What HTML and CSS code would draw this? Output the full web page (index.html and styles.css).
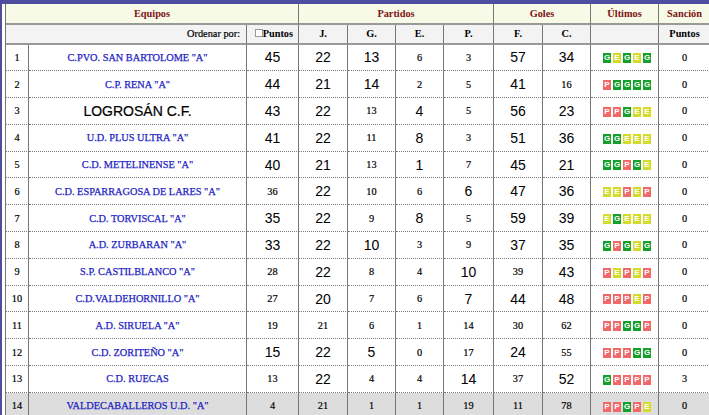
FILE: index.html
```html
<!DOCTYPE html>
<html lang="es">
<head>
<meta charset="utf-8">
<title>Clasificación</title>
<link rel="stylesheet" href="styles.css">
</head>
<body>
<div class="frame">
<table class="standings">
<colgroup>
<col class="c-rank"><col class="c-team"><col class="c-pts"><col class="c-j"><col class="c-g"><col class="c-e"><col class="c-p"><col class="c-f"><col class="c-c"><col class="c-last"><col class="c-san">
</colgroup>
<thead>
<tr class="h1">
<th colspan="3">Equipos</th>
<th colspan="4">Partidos</th>
<th colspan="2">Goles</th>
<th>Últimos</th>
<th class="end">Sanción</th>
</tr>
<tr class="h2">
<th colspan="2" class="order">Ordenar por:</th>
<th class="sortpts"><span class="chk"></span>Puntos</th>
<th>J.</th><th>G.</th><th>E.</th><th>P.</th><th>F.</th><th>C.</th><th></th><th class="end">Puntos</th>
</tr>
</thead>
<tbody>
<tr><td class="rank">1</td><td class="team">C.PVO. SAN BARTOLOME "A"</td><td class="b">45</td><td class="b">22</td><td class="b">13</td><td class="s">6</td><td class="s">3</td><td class="b">57</td><td class="b">34</td><td class="last"><span class="form"><span class="f G">G</span><span class="f E">E</span><span class="f G">G</span><span class="f E">E</span><span class="f G">G</span></span></td><td class="s end">0</td></tr>
<tr><td class="rank">2</td><td class="team">C.P. RENA "A"</td><td class="b">44</td><td class="b">21</td><td class="b">14</td><td class="s">2</td><td class="s">5</td><td class="b">41</td><td class="s">16</td><td class="last"><span class="form"><span class="f P">P</span><span class="f G">G</span><span class="f G">G</span><span class="f G">G</span><span class="f G">G</span></span></td><td class="s end">0</td></tr>
<tr><td class="rank">3</td><td class="team big">LOGROSÁN C.F.</td><td class="b">43</td><td class="b">22</td><td class="s">13</td><td class="b">4</td><td class="s">5</td><td class="b">56</td><td class="b">23</td><td class="last"><span class="form"><span class="f P">P</span><span class="f P">P</span><span class="f G">G</span><span class="f E">E</span><span class="f E">E</span></span></td><td class="s end">0</td></tr>
<tr><td class="rank">4</td><td class="team">U.D. PLUS ULTRA "A"</td><td class="b">41</td><td class="b">22</td><td class="s">11</td><td class="b">8</td><td class="s">3</td><td class="b">51</td><td class="b">36</td><td class="last"><span class="form"><span class="f G">G</span><span class="f G">G</span><span class="f E">E</span><span class="f E">E</span><span class="f E">E</span></span></td><td class="s end">0</td></tr>
<tr><td class="rank">5</td><td class="team">C.D. METELINENSE "A"</td><td class="b">40</td><td class="b">21</td><td class="s">13</td><td class="b">1</td><td class="s">7</td><td class="b">45</td><td class="b">21</td><td class="last"><span class="form"><span class="f G">G</span><span class="f G">G</span><span class="f P">P</span><span class="f G">G</span><span class="f E">E</span></span></td><td class="s end">0</td></tr>
<tr><td class="rank">6</td><td class="team">C.D. ESPARRAGOSA DE LARES "A"</td><td class="s">36</td><td class="b">22</td><td class="s">10</td><td class="s">6</td><td class="b">6</td><td class="b">47</td><td class="b">36</td><td class="last"><span class="form"><span class="f E">E</span><span class="f E">E</span><span class="f P">P</span><span class="f E">E</span><span class="f P">P</span></span></td><td class="s end">0</td></tr>
<tr><td class="rank">7</td><td class="team">C.D. TORVISCAL "A"</td><td class="b">35</td><td class="b">22</td><td class="s">9</td><td class="b">8</td><td class="s">5</td><td class="b">59</td><td class="b">39</td><td class="last"><span class="form"><span class="f E">E</span><span class="f G">G</span><span class="f E">E</span><span class="f E">E</span><span class="f E">E</span></span></td><td class="s end">0</td></tr>
<tr><td class="rank">8</td><td class="team">A.D. ZURBARAN "A"</td><td class="b">33</td><td class="b">22</td><td class="b">10</td><td class="s">3</td><td class="s">9</td><td class="b">37</td><td class="b">35</td><td class="last"><span class="form"><span class="f G">G</span><span class="f P">P</span><span class="f G">G</span><span class="f E">E</span><span class="f G">G</span></span></td><td class="s end">0</td></tr>
<tr><td class="rank">9</td><td class="team">S.P. CASTILBLANCO "A"</td><td class="s">28</td><td class="b">22</td><td class="s">8</td><td class="s">4</td><td class="b">10</td><td class="s">39</td><td class="b">43</td><td class="last"><span class="form"><span class="f P">P</span><span class="f E">E</span><span class="f P">P</span><span class="f E">E</span><span class="f P">P</span></span></td><td class="s end">0</td></tr>
<tr><td class="rank">10</td><td class="team">C.D.VALDEHORNILLO "A"</td><td class="s">27</td><td class="b">20</td><td class="s">7</td><td class="s">6</td><td class="b">7</td><td class="b">44</td><td class="b">48</td><td class="last"><span class="form"><span class="f P">P</span><span class="f P">P</span><span class="f P">P</span><span class="f E">E</span><span class="f P">P</span></span></td><td class="s end">0</td></tr>
<tr><td class="rank">11</td><td class="team">A.D. SIRUELA "A"</td><td class="s">19</td><td class="s">21</td><td class="s">6</td><td class="s">1</td><td class="s">14</td><td class="s">30</td><td class="s">62</td><td class="last"><span class="form"><span class="f P">P</span><span class="f P">P</span><span class="f G">G</span><span class="f G">G</span><span class="f P">P</span></span></td><td class="s end">0</td></tr>
<tr><td class="rank">12</td><td class="team">C.D. ZORITEÑO "A"</td><td class="b">15</td><td class="b">22</td><td class="b">5</td><td class="s">0</td><td class="s">17</td><td class="b">24</td><td class="s">55</td><td class="last"><span class="form"><span class="f P">P</span><span class="f P">P</span><span class="f P">P</span><span class="f G">G</span><span class="f G">G</span></span></td><td class="s end">0</td></tr>
<tr><td class="rank">13</td><td class="team">C.D. RUECAS</td><td class="s">13</td><td class="b">22</td><td class="s">4</td><td class="s">4</td><td class="b">14</td><td class="s">37</td><td class="b">52</td><td class="last"><span class="form"><span class="f G">G</span><span class="f P">P</span><span class="f P">P</span><span class="f P">P</span><span class="f P">P</span></span></td><td class="s end">3</td></tr>
<tr class="relegated"><td class="rank">14</td><td class="team">VALDECABALLEROS U.D. "A"</td><td class="s">4</td><td class="s">21</td><td class="s">1</td><td class="s">1</td><td class="s">19</td><td class="s">11</td><td class="s">78</td><td class="last"><span class="form"><span class="f P">P</span><span class="f P">P</span><span class="f G">G</span><span class="f P">P</span><span class="f E">E</span></span></td><td class="s end">0</td></tr>
</tbody>
</table>
</div>
</body>
</html>
```
FILE: styles.css
```css
html, body {
  margin: 0;
  padding: 0;
  background: #ffffff;
  overflow: hidden;
}
body {
  font-family: "Liberation Serif", "Times New Roman", serif;
  font-size: 10.3px;
  color: #000;
}
.frame {
  border-top: 4px solid #4f4e9e;
  border-left: 2px solid #4f4e9e;
  padding-left: 3px;
}
.standings {
  border-collapse: separate;
  border-spacing: 0;
  table-layout: fixed;
  width: 705px;
  border-left: 1px solid #777;
}
.c-rank { width: 23px; }
.c-team { width: 218px; }
.c-pts { width: 52px; }
.c-j { width: 49px; }
.c-g { width: 48px; }
.c-e { width: 48px; }
.c-p { width: 50px; }
.c-f { width: 49px; }
.c-c { width: 48px; }
.c-last { width: 68px; }
.c-san { width: 51px; }

th, td {
  box-sizing: border-box;
  padding: 0;
  text-align: center;
  vertical-align: middle;
  border-right: 1px solid #777;
  white-space: nowrap;
  overflow: hidden;
}
th.end, td.end { border-right: none; }

.h1 th {
  background: #f8fae8;
  color: #7d1212;
  font-weight: bold;
  font-size: 10.3px;
  height: 21px;
  border-bottom: 2px solid #999;
}
.h2 th {
  background: #f3f3f3;
  color: #000;
  font-weight: bold;
  font-size: 10.3px;
  height: 19.5px;
  border-bottom: 2px solid #999;
}
.h2 th.order {
  text-align: right;
  font-weight: normal;
  padding-right: 6px;
  -webkit-text-stroke: 0.2px currentColor;
}
.h2 th.sortpts {
  text-align: right;
  padding-right: 5px;
}
.chk {
  display: inline-block;
  width: 6px;
  height: 6px;
  border: 1px solid #999;
  background: #fff;
  vertical-align: 0;
}

tbody td {
  height: 26.8px;
  border-bottom: 1px dotted #7a7a7a;
}
.rank {
  font-size: 10.3px;
  -webkit-text-stroke: 0.2px currentColor;
}
.team {
  color: #1f1fc4;
  font-size: 10.3px;
  -webkit-text-stroke: 0.25px currentColor;
}
.team.big {
  color: #000;
  font-family: "Liberation Sans", Arial, sans-serif;
  font-size: 14px;
  -webkit-text-stroke: 0.2px currentColor;
}
.b {
  font-family: "Liberation Sans", Arial, sans-serif;
  font-size: 14px;
}
.s {
  font-size: 10.3px;
  -webkit-text-stroke: 0.2px currentColor;
}
.relegated td {
  background: #dddddd;
}
.last {
  padding-left: 5px;
}
.form {
  display: inline-flex;
  gap: 2px;
  vertical-align: middle;
}
.f {
  display: block;
  width: 8px;
  height: 10px;
  font-family: "Liberation Sans", Arial, sans-serif;
  font-weight: bold;
  font-size: 8px;
  line-height: 10px;
  color: #fff;
  text-align: center;
}
.G { background: #14a02b; }
.E { background: #d3dc2a; }
.P { background: #f06868; }
```
